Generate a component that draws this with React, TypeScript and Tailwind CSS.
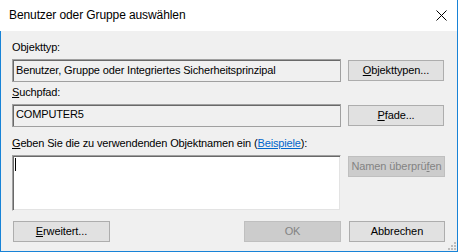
import type { ReactNode } from 'react';

const font = { fontFamily: '"Liberation Sans", Arial, sans-serif' };

function Btn({ children, disabled, className = '' }: { children: ReactNode; disabled?: boolean; className?: string }) {
  return (
    <button
      type="button"
      disabled={disabled}
      className={
        'h-[21px] flex items-center justify-center whitespace-nowrap border text-[11px] leading-[15px] tracking-[-0.1px] ' +
        (disabled
          ? 'bg-[#cccccc] border-[#bfbfbf] text-[#838383]'
          : 'bg-[#e1e1e1] border-[#adadad] text-black') +
        ' ' +
        className
      }
    >
      {children}
    </button>
  );
}

function CloseIcon() {
  return (
    <svg width="11" height="11" viewBox="0 0 11 11" className="block">
      <path d="M0.5 0.5 L10.5 10.5 M10.5 0.5 L0.5 10.5" stroke="#000" strokeWidth="1" fill="none" />
    </svg>
  );
}

function Grip() {
  return (
    <svg width="8" height="8" viewBox="0 0 8 8" className="block">
      <rect x="6" y="0" width="2" height="2" fill="#bcbcbc" />
      <rect x="3" y="3" width="2" height="2" fill="#bcbcbc" />
      <rect x="6" y="3" width="2" height="2" fill="#bcbcbc" />
      <rect x="0" y="6" width="2" height="2" fill="#bcbcbc" />
      <rect x="3" y="6" width="2" height="2" fill="#bcbcbc" />
      <rect x="6" y="6" width="2" height="2" fill="#bcbcbc" />
    </svg>
  );
}

export default function App() {
  return (
    <div style={font} className="w-[458px] h-[252px] flex flex-col border-r border-b border-[#1883d7] text-black text-[11px] leading-[15px] tracking-[-0.15px]">
      {/* Titelleiste */}
      <div className="h-[31px] bg-white flex items-center justify-between pl-[9px] pr-[10px]">
        <span className="text-[12px] tracking-[-0.1px]">Benutzer oder Gruppe auswählen</span>
        <CloseIcon />
      </div>

      {/* Inhalt */}
      <div className="flex-1 flex flex-col bg-[#f0f0f0] border-l border-[#1883d7] pl-[11px] pr-[12px] relative">
        <div className="mt-[9px]">Objekttyp:</div>
        <div className="mt-[4px] flex items-center gap-[7px]">
          <div className="w-[329px] h-[23px] flex items-center pl-[3px] whitespace-nowrap border border-[#a0a0a0] shadow-[inset_1px_1px_0_#696969] bg-[#f0f0f0]">
            Benutzer, Gruppe oder Integriertes Sicherheitsprinzipal
          </div>
          <Btn className="w-[96px]">
            <span><span className="underline">O</span>bjekttypen...</span>
          </Btn>
        </div>

        <div className="mt-[3px]"><span className="underline">S</span>uchpfad:</div>
        <div className="mt-[4px] flex items-center gap-[7px]">
          <div className="w-[329px] h-[23px] flex items-start pt-[2px] pl-[3px] border border-[#a0a0a0] shadow-[inset_1px_1px_0_#696969] bg-[#f0f0f0]">
            COMPUTER5
          </div>
          <Btn className="w-[96px]">
            <span><span className="underline">P</span>fade...</span>
          </Btn>
        </div>

        <div className="mt-[9px] whitespace-nowrap">
          <span className="underline">G</span>eben Sie die zu verwendenden Objektnamen ein (
          <span className="text-[#0066cc] underline">Beispiele</span>):
        </div>
        <div className="mt-[4px] flex items-start gap-[7px]">
          <div className="w-[329px] h-[56px] bg-white border border-t-[#a0a0a0] border-l-[#a0a0a0] border-r-[#f0f0f0] border-b-[#f0f0f0] shadow-[inset_1px_1px_0_#696969,inset_-1px_-1px_0_#e3e3e3] pl-[2px] pt-[2px]">
            <div className="w-[1px] h-[13px] bg-black" />
          </div>
          <Btn disabled className="w-[97px] mt-[1px]">
            <span>Namen überprü<span className="underline">f</span>en</span>
          </Btn>
        </div>

        <div className="mt-[10px] flex items-center">
          <Btn className="w-[97px] ml-[1px]">
            <span><span className="underline">E</span>rweitert...</span>
          </Btn>
          <div className="flex-1" />
          <Btn disabled className="w-[97px]">OK</Btn>
          <Btn className="w-[96px] ml-[8px]">Abbrechen</Btn>
        </div>

        <div className="absolute right-[1px] bottom-[1px]">
          <Grip />
        </div>
      </div>
    </div>
  );
}
